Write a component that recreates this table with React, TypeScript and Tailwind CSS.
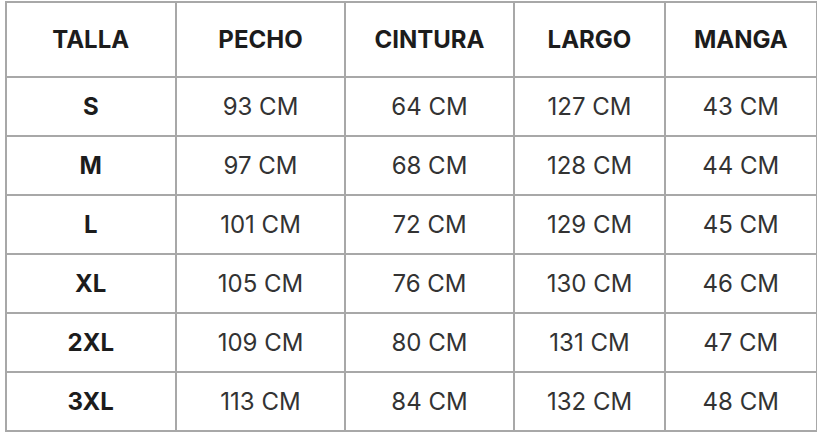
import React from 'react';

const rows = [
  ['S', '93 CM', '64 CM', '127 CM', '43 CM'],
  ['M', '97 CM', '68 CM', '128 CM', '44 CM'],
  ['L', '101 CM', '72 CM', '129 CM', '45 CM'],
  ['XL', '105 CM', '76 CM', '130 CM', '46 CM'],
  ['2XL', '109 CM', '80 CM', '131 CM', '47 CM'],
  ['3XL', '113 CM', '84 CM', '132 CM', '48 CM'],
];

const headers = ['TALLA', 'PECHO', 'CINTURA', 'LARGO', 'MANGA'];

export default function App() {
  return (
    <div className="min-h-screen bg-white pl-[4.5px] pt-[1px]" style={{ fontFamily: 'Inter, "Liberation Sans", sans-serif' }}>
      <table className="table-fixed border-collapse w-[811px] text-center">
        <colgroup>
          <col className="w-[170.5px]" />
          <col className="w-[169px]" />
          <col className="w-[169px]" />
          <col className="w-[151px]" />
          <col className="w-[151.5px]" />
        </colgroup>
        <thead>
          <tr className="h-[75px]">
            {headers.map((h) => (
              <th key={h} className="border-2 border-[#a8a8a8] text-[24px] font-bold text-[#1c1c1c] p-0">
                {h}
              </th>
            ))}
          </tr>
        </thead>
        <tbody>
          {rows.map((r) => (
            <tr key={r[0]} className="h-[59px]">
              {r.map((cell, i) => (
                <td
                  key={i}
                  className={
                    i === 0
                      ? 'border-2 border-[#a8a8a8] text-[24px] font-bold text-[#1c1c1c] p-0'
                      : 'border-2 border-[#a8a8a8] text-[24px] text-[#333333] p-0'
                  }
                >
                  {cell}
                </td>
              ))}
            </tr>
          ))}
        </tbody>
      </table>
    </div>
  );
}
